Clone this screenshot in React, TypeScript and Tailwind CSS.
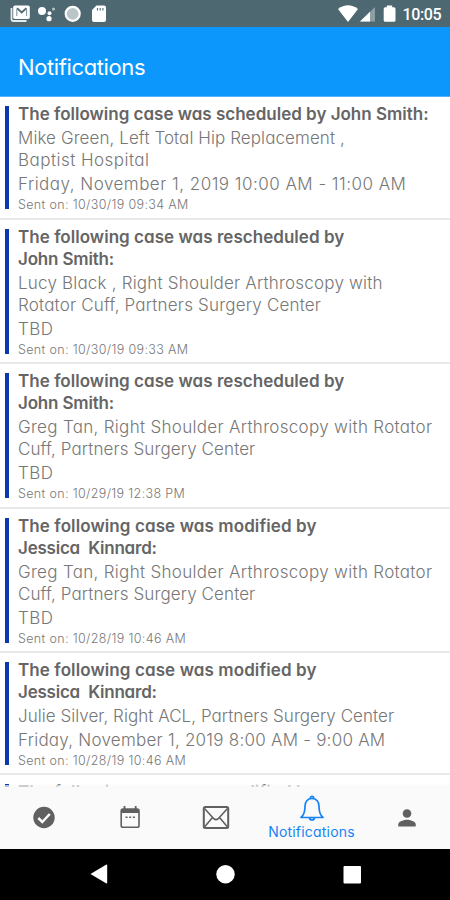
import React from "react";

type Line = { text: string; track: string };
type Notice = { title: Line[]; body: Line[]; when?: Line; sent?: string };

const rescheduled: Line[] = [
  { text: "The following case was rescheduled by", track: "tracking-[0.04px]" },
  { text: "John Smith:", track: "tracking-[-0.18px]" },
];
const modified: Line[] = [
  { text: "The following case was modified by", track: "tracking-[0.1px]" },
  { text: "Jessica  Kinnard:", track: "tracking-[-0.22px]" },
];
const gregTan: Line[] = [
  { text: "Greg Tan, Right Shoulder Arthroscopy with Rotator", track: "tracking-[0.31px]" },
  { text: "Cuff, Partners Surgery Center", track: "tracking-[0.1px]" },
];
const tbd: Line = { text: "TBD", track: "tracking-[0.4px]" };

const notices: Notice[] = [
  {
    title: [{ text: "The following case was scheduled by John Smith:", track: "tracking-[0px]" }],
    body: [
      { text: "Mike Green, Left Total Hip Replacement ,", track: "tracking-[0.08px]" },
      { text: "Baptist Hospital", track: "tracking-[0.47px]" },
    ],
    when: { text: "Friday, November 1, 2019 10:00 AM - 11:00 AM", track: "tracking-[0.48px]" },
    sent: "10/30/19 09:34 AM",
  },
  {
    title: rescheduled,
    body: [
      { text: "Lucy Black , Right Shoulder Arthroscopy with", track: "tracking-[0.2px]" },
      { text: "Rotator Cuff, Partners Surgery Center", track: "tracking-[0.19px]" },
    ],
    when: tbd,
    sent: "10/30/19 09:33 AM",
  },
  { title: rescheduled, body: gregTan, when: tbd, sent: "10/29/19 12:38 PM" },
  { title: modified, body: gregTan, when: tbd, sent: "10/28/19 10:46 AM" },
  {
    title: modified,
    body: [{ text: "Julie Silver, Right ACL, Partners Surgery Center", track: "tracking-[0.04px]" }],
    when: { text: "Friday, November 1, 2019 8:00 AM - 9:00 AM", track: "tracking-[0.24px]" },
    sent: "10/28/19 10:46 AM",
  },
  { title: modified.slice(0, 1), body: [] },
];

function Rows({ lines, className }: { lines: Line[]; className: string }) {
  return (
    <div className={className}>
      {lines.map((l) => (
        <div key={l.text} className={l.track}>{l.text}</div>
      ))}
    </div>
  );
}

function NoticeCard({ notice }: { notice: Notice }) {
  return (
    <article className="flex shrink-0 border-b-2 border-[#e9e9ea] pt-[6px] pb-[5.4px] pl-[5px]">
      <div className="mt-[3px] mb-[3px] w-1 shrink-0 bg-[#0b38ad]" />
      <div className="pl-[9px] whitespace-pre text-[#777777]">
        <Rows lines={notice.title} className="text-[17px] leading-[22px] font-semibold text-[#656565]" />
        <Rows lines={notice.body} className="mt-[2px] text-[17px] leading-[22px] font-light" />
        {notice.when && <Rows lines={[notice.when]} className="mt-[2px] text-[17px] leading-[22px] font-light" />}
        {notice.sent && (
          <div className="mt-[3px] text-[12.5px] leading-[14px] font-light tracking-[0.35px]">Sent on: {notice.sent}</div>
        )}
      </div>
    </article>
  );
}

function StatusBar() {
  return (
    <div className="h-[27px] shrink-0 bg-[#4d6871]">
      <svg width="450" height="27" viewBox="0 0 450 27" fill="#fff">
        <path d="M11.500 8v11a2 2 0 0 0 2 2h13" fill="none" stroke="#e6ebec" strokeWidth="1.800" />
        <path d="M15 5.500h13a1.800 1.800 0 0 1 1.800 1.800v10a1.800 1.800 0 0 1-1.800 1.800H15a1.800 1.800 0 0 1-1.800-1.800v-10A1.800 1.800 0 0 1 15 5.500z" />
        <path d="M17 8.200l4.700 4.300 4.700-4.300" fill="none" stroke="#4d6871" strokeWidth="1.800" />
        <path d="M16.800 9v7M26.600 9v7" stroke="#7d9097" strokeWidth="1" />
        <circle cx="42" cy="11" r="4" />
        <circle cx="49.500" cy="13.300" r="2" />
        <circle cx="53.500" cy="9" r="1.500" fill="#b9c5c8" />
        <circle cx="49" cy="18.700" r="2.600" />
        <circle cx="72.700" cy="13.800" r="7" fill="#b9c5c8" stroke="#fff" strokeWidth="2.200" />
        <path d="M96.500 5.500h7.500a2 2 0 0 1 2 2v12.500a2 2 0 0 1-2 2H94a2 2 0 0 1-2-2V10z" />
        <path d="M97.500 8v2.500M100.200 8v2.500M102.900 8v2.500" stroke="#4d6871" strokeWidth="1.100" />
        <path d="M338 9q10-7.500 20 0L348 22z" />
        <path d="M375 7v14.500h-15z" fill="#8d9fa5" />
        <path d="M370 11.800v9.700h-10z" />
        <path d="M386.800 5.500h5.400v1.800h1.800a1.500 1.500 0 0 1 1.500 1.500v11.500a1.500 1.500 0 0 1-1.500 1.500h-8.800a1.500 1.500 0 0 1-1.500-1.500V8.800a1.500 1.500 0 0 1 1.500-1.500h1.600z" />
        <text x="402.500" y="20" fontSize="16" fontWeight="500" fontFamily="Roboto, sans-serif" textLength="39">10:05</text>
      </svg>
    </div>
  );
}

function TabBar() {
  return (
    <nav className="relative -mt-[2px] grid h-[64px] shrink-0 grid-cols-[87px_86px_86px_105px_86px] justify-items-center border-t-2 border-[#fafafa]/70 bg-[#fafafa] bg-clip-padding text-[#606060]">
      <svg className="mt-[19px]" width="24" height="24" viewBox="0 0 24 24">
        <circle cx="12" cy="11.500" r="10.700" fill="currentColor" />
        <path d="M6.300 12l4 4 7.500-8" fill="none" stroke="#fafafa" strokeWidth="2.500" />
      </svg>
      <svg className="mt-[19px]" width="24" height="24" viewBox="0 0 24 24" fill="none" stroke="currentColor">
        <rect x="3.200" y="3" width="17.800" height="18.300" rx="1.800" strokeWidth="1.600" />
        <path d="M3 5h18" strokeWidth="4" />
        <path d="M6.500 0v4M17.700 0v4" strokeWidth="1.800" />
        <path d="M7.500 11.200h2M11.200 11.200h2M14.900 11.200h2" strokeWidth="1.600" />
      </svg>
      <svg className="mt-[18px]" width="28" height="25" viewBox="0 0 28 25" fill="none" stroke="currentColor" strokeWidth="1.600">
        <rect x="1.800" y="2" width="24.400" height="21" rx="1.500" strokeWidth="2" />
        <path d="M2.500 3.500l9.300 10.200q2.200 2 4.400 0l9.300-10.200M2.500 22l8-9.500M25.500 22l-8-9.500" />
      </svg>
      <div className="flex flex-col items-center text-[#1583f5]">
        <svg className="mt-[8px]" width="26" height="28" viewBox="0 0 26 28" fill="none" stroke="currentColor" strokeWidth="1.700" strokeLinejoin="round">
          <path d="M13 3.500c-4.600 0-7 3.300-7 7.700 0 6.500-1.200 9-4 11.300h22c-2.800-2.300-4-4.800-4-11.300 0-4.400-2.400-7.700-7-7.700z" />
          <path d="M11.300 3.300c0-2.500 3.400-2.500 3.400 0M10.500 23c.4 2.500 4.600 2.500 5 0" />
        </svg>
        <span className="text-[14px] leading-[17px] tracking-[0.2px]">Notifications</span>
      </div>
      <svg className="mt-[20px]" width="20" height="22" viewBox="0 0 20 22" fill="currentColor">
        <circle cx="10" cy="6.500" r="4.300" />
        <path d="M1.300 19.500v-2.200c0-3 5.800-4.500 8.700-4.500s8.700 1.500 8.700 4.500v2.200z" />
      </svg>
    </nav>
  );
}

export default function App() {
  return (
    <main className="flex h-[900px] w-[450px] flex-col overflow-hidden bg-white font-[Inter,'Open_Sans',sans-serif] [font-feature-settings:'cv11']">
      <StatusBar />
      <header className="flex h-[70px] shrink-0 items-center border-b border-[#55b2fb] bg-[#0c97fd] pt-[11px] pl-[18px] text-[22px] tracking-[-0.38px] text-white">
        Notifications
      </header>
      <section className="flex min-h-0 flex-1 flex-col overflow-hidden pt-[0.4px]">
        {notices.map((n, i) => (
          <NoticeCard key={i} notice={n} />
        ))}
      </section>
      <TabBar />
      <footer className="h-[51px] shrink-0 bg-black">
        <svg width="450" height="51" viewBox="0 0 450 51" fill="#fff">
          <path d="M90.500 25l15.500-9.300q1.200-.5 1.200.7v17.200q0 1.200-1.200.7z" />
          <circle cx="225.500" cy="25.300" r="9.200" />
          <rect x="343.500" y="17" width="17.500" height="17.500" rx="1" />
        </svg>
      </footer>
    </main>
  );
}
